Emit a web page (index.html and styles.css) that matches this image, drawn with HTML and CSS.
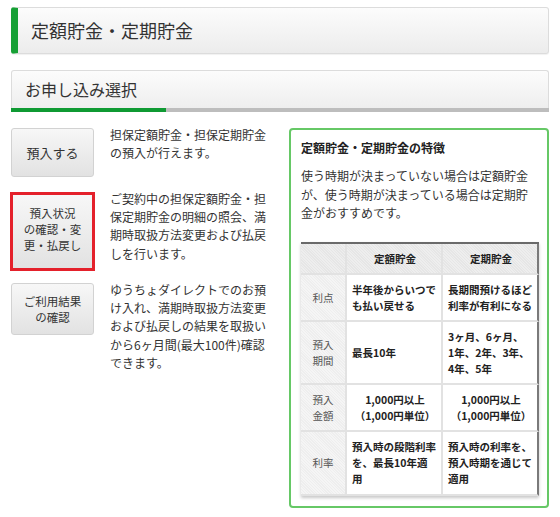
FILE: index.html
```html
<!DOCTYPE html>
<html lang="ja">
<head>
<meta charset="utf-8">
<title>定額貯金・定期貯金</title>
<link rel="stylesheet" href="styles.css">
</head>
<body>
<div class="page">
  <h1 class="title">定額貯金・定期貯金</h1>
  <div class="section">
    <h2 class="section-title">お申し込み選択</h2>
    <div class="progress"><div class="progress-done"></div></div>
  </div>
  <div class="content">
    <div class="menu">
      <div class="menu-row row-1">
        <div class="btn btn-deposit">預入する</div>
        <p class="menu-text">担保定額貯金・担保定期貯金の預入が行えます。</p>
      </div>
      <div class="menu-row row-2">
        <div class="btn btn-small btn-selected">預入状況<br>の確認・変<br>更・払戻し</div>
        <p class="menu-text">ご契約中の担保定額貯金・担保定期貯金の明細の照会、満期時取扱方法変更および払戻しを行います。</p>
      </div>
      <div class="menu-row row-3">
        <div class="btn btn-small btn-result">ご利用結果<br>の確認</div>
        <p class="menu-text">ゆうちょダイレクトでのお預け入れ、満期時取扱方法変更および払戻しの結果を取扱いから6ヶ月間(最大100件)確認できます。</p>
      </div>
    </div>
    <div class="panel">
      <h3 class="panel-title">定額貯金・定期貯金の特徴</h3>
      <p class="panel-text">使う時期が決まっていない場合は定額貯金が、使う時期が決まっている場合は定期貯金がおすすめです。</p>
      <table class="compare">
        <thead>
          <tr>
            <th class="c1"></th>
            <th class="c2">定額貯金</th>
            <th class="c3">定期貯金</th>
          </tr>
        </thead>
        <tbody>
          <tr>
            <th>利点</th>
            <td>半年後からいつで<br>も払い戻せる</td>
            <td>長期間預けるほど<br>利率が有利になる</td>
          </tr>
          <tr>
            <th>預入<br>期間</th>
            <td>最長10年</td>
            <td>3ヶ月、6ヶ月、<br>1年、2年、3年、<br>4年、5年</td>
          </tr>
          <tr>
            <th>預入<br>金額</th>
            <td class="center">1,000円以上<br>（1,000円単位）</td>
            <td class="center">1,000円以上<br>（1,000円単位）</td>
          </tr>
          <tr class="last">
            <th>利率</th>
            <td>預入時の段階利率<br>を、最長10年適<br>用</td>
            <td>預入時の利率を、<br>預入時期を通じて<br>適用</td>
          </tr>
        </tbody>
      </table>
    </div>
  </div>
</div>
</body>
</html>
```

FILE: styles.css
```css
* {
  box-sizing: border-box;
}

body {
  margin: 0;
  background: #fff;
  color: #333;
  font-family: "Noto Sans CJK JP", "Noto Sans", sans-serif;
}

.page {
  width: 560px;
  padding: 7px 11px 0 11px;
}

.title {
  margin: 0;
  height: 47px;
  padding-left: 13px;
  border: 1px solid #dcdcdc;
  border-left: 7px solid #16a035;
  border-radius: 3px;
  background: linear-gradient(#fcfcfc, #ececec);
  box-shadow: 0 1px 1px rgba(0, 0, 0, 0.06);
  font-size: 18px;
  font-weight: normal;
  line-height: 45px;
  color: #333;
}

.section {
  margin-top: 16px;
}

.section-title {
  margin: 0;
  height: 38px;
  padding-left: 13px;
  border: 1px solid #dcdcdc;
  border-bottom: none;
  border-radius: 3px 3px 0 0;
  background: linear-gradient(#fcfcfc, #eeeeee);
  font-size: 16px;
  font-weight: normal;
  line-height: 37px;
  color: #333;
}

.progress {
  height: 4px;
  background: #bdbdbd;
}

.progress-done {
  width: 155px;
  height: 100%;
  background: #0f9a33;
}

.content {
  display: flex;
  gap: 19px;
  margin-top: 16px;
  align-items: flex-start;
}

.menu {
  width: 259px;
  display: flex;
  flex-direction: column;
}

.menu-row {
  display: flex;
  gap: 16px;
  align-items: flex-start;
}

.row-1 {
  margin-bottom: 15px;
}

.row-2 {
  margin-bottom: 12px;
}

.btn {
  flex: none;
  width: 83px;
  display: flex;
  align-items: center;
  justify-content: center;
  text-align: center;
  border: 1px solid #d2d2d2;
  border-radius: 3px;
  background: linear-gradient(#f7f7f7, #e2e2e2);
  color: #333;
}

.btn-deposit {
  height: 49px;
  font-size: 13px;
}

.btn-small {
  font-size: 11.5px;
  line-height: 16px;
}

.btn-selected {
  width: 85px;
  height: 79px;
  margin: 0 -1px;
  border: 3px solid #e4212b;
  border-radius: 0;
  padding-bottom: 6px;
}

.btn-result {
  height: 52px;
}

.menu-text {
  margin: -2px 0 0;
  width: 160px;
  font-size: 12px;
  line-height: 18.2px;
  color: #333;
}

.panel {
  width: 260px;
  padding: 9px 8px 10px 10px;
  border: 2px solid #66c866;
  border-radius: 4px;
}

.panel-title {
  margin: 0;
  font-size: 12px;
  font-weight: bold;
  line-height: 18px;
  color: #222;
}

.panel-text {
  margin: 10px 0 0;
  font-size: 12px;
  line-height: 18.5px;
  color: #333;
}

.compare {
  margin-top: 19px;
  width: 238px;
  table-layout: fixed;
  border-collapse: separate;
  border-spacing: 0;
  border-top: 2px solid #6a6a6a;
  box-shadow: 0 2px 3px rgba(0, 0, 0, 0.22);
  font-size: 10.5px;
  line-height: 16px;
}

.compare th,
.compare td {
  border-right: 2px solid #e2e2e2;
  border-bottom: 2px solid #e2e2e2;
  padding: 7px 3px 6px 5px;
  vertical-align: middle;
}

.compare tr > :last-child {
  border-right: 2px solid #7a7a7a;
}

.compare thead th {
  padding-top: 7px;
  padding-bottom: 6px;
  text-align: center;
  font-weight: bold;
  color: #222;
  background: repeating-linear-gradient(45deg, #eeeeee 0 1px, #e6e6e6 1px 2px);
}

.compare .c1 {
  width: 46px;
}

.compare .c2 {
  width: 96px;
}

.compare .c3 {
  width: 96px;
}

.compare tbody th {
  padding-left: 3px;
  text-align: center;
  font-weight: normal;
  color: #555;
  background: repeating-linear-gradient(45deg, #f5f5f5 0 1px, #eeeeee 1px 2px);
}

.compare tbody td {
  text-align: left;
  font-weight: bold;
  color: #222;
  background: #fff;
}

.compare tbody td.center {
  text-align: center;
}

.compare tr.last > * {
  padding-bottom: 7px;
}
```
